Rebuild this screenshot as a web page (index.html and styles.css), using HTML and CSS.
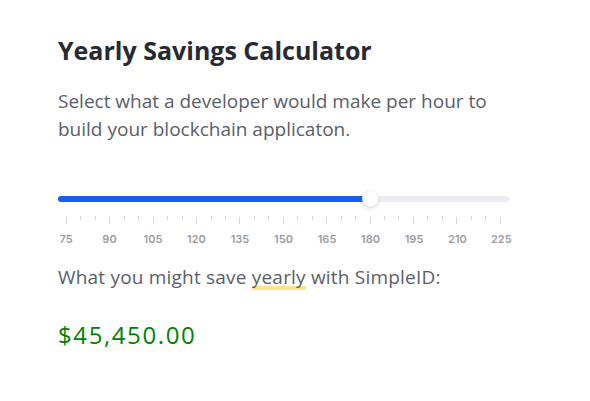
FILE: index.html
```html
<!DOCTYPE html>
<html>
<head>
<meta charset="utf-8">
<link rel="stylesheet" href="styles.css">
</head>
<body>
<main class="calc">
  <h1 class="title">Yearly Savings Calculator</h1>
  <p class="lead">Select what a developer would make per hour to build your blockchain applicaton.</p>
  <div class="slider">
    <div class="track">
      <div class="fill" style="width: 70%"></div>
      <div class="thumb" style="left: calc(8px + 70% - 16px * 0.7)"></div>
    </div>
    <div class="ticks">
      <span class="tick major"></span><span class="tick"></span><span class="tick"></span>
      <span class="tick major"></span><span class="tick"></span><span class="tick"></span>
      <span class="tick major"></span><span class="tick"></span><span class="tick"></span>
      <span class="tick major"></span><span class="tick"></span><span class="tick"></span>
      <span class="tick major"></span><span class="tick"></span><span class="tick"></span>
      <span class="tick major"></span><span class="tick"></span><span class="tick"></span>
      <span class="tick major"></span><span class="tick"></span><span class="tick"></span>
      <span class="tick major"></span><span class="tick"></span><span class="tick"></span>
      <span class="tick major"></span><span class="tick"></span><span class="tick"></span>
      <span class="tick major"></span><span class="tick"></span><span class="tick"></span>
      <span class="tick major"></span>
    </div>
    <div class="labels">
      <span>75</span><span>90</span><span>105</span><span>120</span><span>135</span><span>150</span><span>165</span><span>180</span><span>195</span><span>210</span><span>225</span>
    </div>
  </div>
  <p class="save">What you might save <span class="mark">yearly</span> with SimpleID:</p>
  <p class="amount">$45,450.00</p>
</main>
</body>
</html>
```

FILE: styles.css
```css
html, body {
  margin: 0;
  background: #fff;
}
body {
  font-family: "Open Sans", sans-serif;
}
.calc {
  width: 451px;
  padding: 34px 0 0 58px;
}
.title {
  margin: 0;
  font-size: 25px;
  line-height: 32px;
  font-weight: 700;
  color: #272a33;
}
.lead {
  margin: 21px 0 0;
  font-size: 19px;
  line-height: 28px;
  color: #5a5e69;
}
.slider {
  margin-top: 53px;
}
.track {
  position: relative;
  height: 6px;
  border-radius: 3px;
  background: #e9edf3;
}
.fill {
  height: 100%;
  border-radius: 3px;
  background: #1a5cf5;
}
.thumb {
  position: absolute;
  top: -6px;
  width: 17px;
  height: 17px;
  margin-left: -8px;
  border-radius: 50%;
  background: #fff;
  box-shadow: 0 1px 1px rgba(0,0,0,0.06), 0 3px 4px rgba(0,0,0,0.08);
  border: 1px solid #eef0f3;
  box-sizing: border-box;
}
.ticks {
  display: flex;
  justify-content: space-between;
  align-items: flex-start;
  margin: 14px 8px 0;
  height: 8px;
}
.tick {
  width: 1px;
  height: 4px;
  background: #d2d5da;
}
.tick.major {
  height: 7px;
  margin-top: 1px;
}
.labels {
  display: flex;
  justify-content: space-between;
  margin: 9px -2px 0;
  font-family: Inter, "Noto Sans", sans-serif;
  font-size: 11px;
  line-height: 13px;
  font-weight: 600;
  color: #9a9da3;
}
.labels span {
  width: 20px;
  text-align: center;
}
.save {
  margin: 17px 0 0;
  font-size: 19px;
  line-height: 28px;
  letter-spacing: 0.2px;
  color: #5a5e69;
}
.mark {
  background: linear-gradient(transparent 85%, #ffe18e 85%);
}
.amount {
  margin: 28px 0 0;
  font-size: 24px;
  line-height: 32px;
  letter-spacing: 1.6px;
  color: #008200;
}
```
